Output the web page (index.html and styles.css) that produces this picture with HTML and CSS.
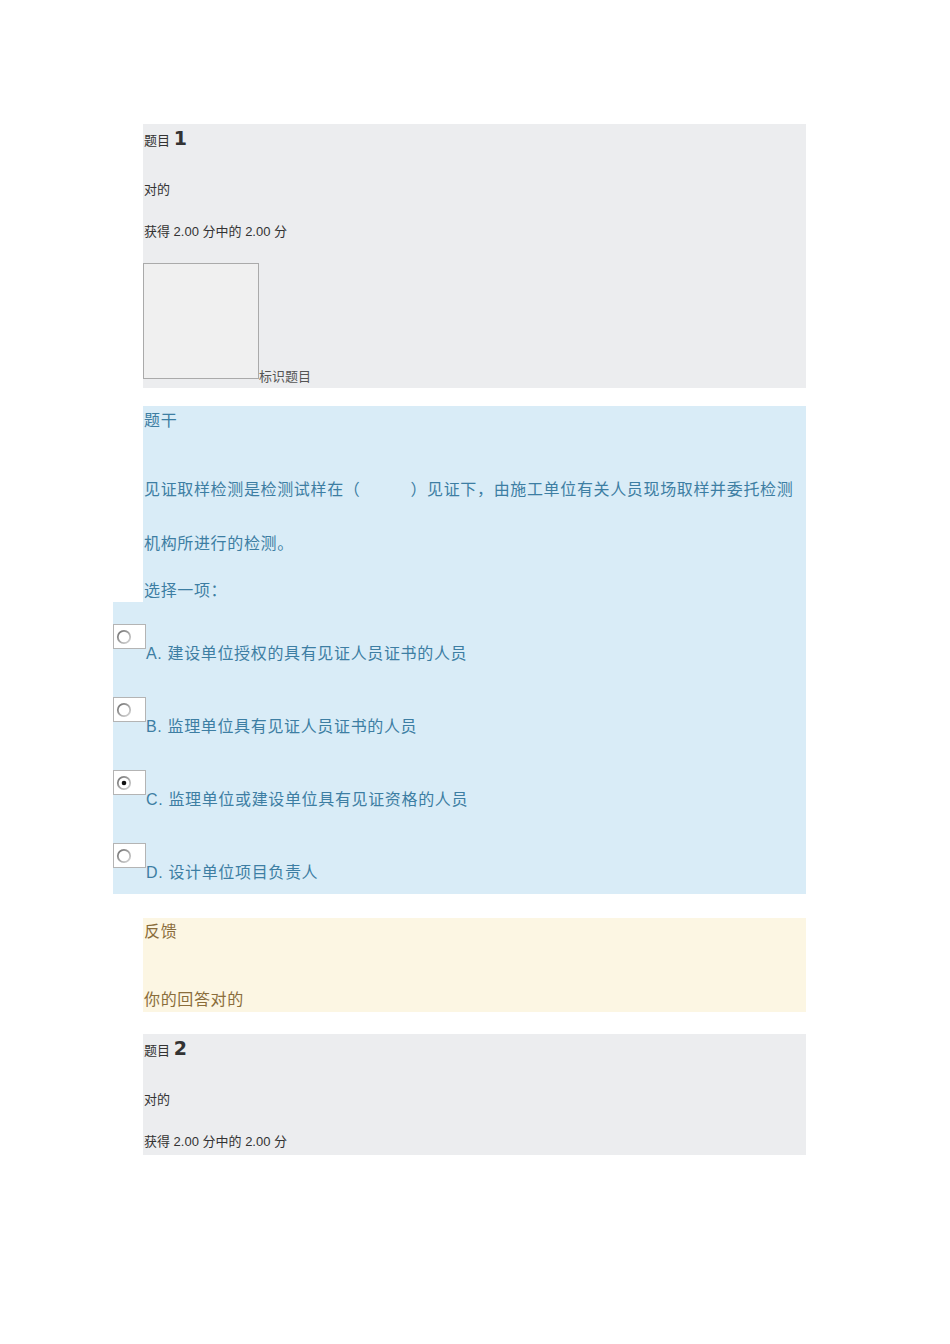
FILE: index.html
```html
<!DOCTYPE html>
<html lang="zh-CN">
<head>
<meta charset="utf-8">
<title>测验</title>
<link rel="stylesheet" href="styles.css">
</head>
<body>
<div class="page">
  <section class="info">
    <h3 class="qno">题目 <span class="num">1</span></h3>
    <div class="state">对的</div>
    <div class="grade">获得 2.00 分中的 2.00 分</div>
    <div class="flag"><span class="flagbox"></span><span class="flagtext">标识题目</span></div>
  </section>

  <section class="content">
    <h4 class="stemtitle">题干</h4>
    <p class="stem">见证取样检测是检测试样在（&emsp;&emsp;&emsp;）见证下，由施工单位有关人员现场取样并委托检测机构所进行的检测。</p>
    <p class="prompt">选择一项：</p>
    <div class="answer">
      <div class="opt">
        <span class="radio"><svg width="16" height="16" viewBox="0 0 16 16"><defs><linearGradient id="g1" x1="0" y1="0" x2="1" y2="1"><stop offset="0" stop-color="#6f6f6f"/><stop offset="1" stop-color="#d8d8d8"/></linearGradient></defs><circle cx="8" cy="8" r="6.2" fill="#fff" stroke="url(#g1)" stroke-width="1.8"/></svg></span>
        <span class="otext">A. 建设单位授权的具有见证人员证书的人员</span>
      </div>
      <div class="opt">
        <span class="radio"><svg width="16" height="16" viewBox="0 0 16 16"><circle cx="8" cy="8" r="6.2" fill="#fff" stroke="url(#g1)" stroke-width="1.8"/></svg></span>
        <span class="otext">B. 监理单位具有见证人员证书的人员</span>
      </div>
      <div class="opt">
        <span class="radio"><svg width="16" height="16" viewBox="0 0 16 16"><circle cx="8" cy="8" r="6.2" fill="#fff" stroke="url(#g1)" stroke-width="1.8"/><circle cx="8" cy="8" r="2.3" fill="#111"/></svg></span>
        <span class="otext">C. 监理单位或建设单位具有见证资格的人员</span>
      </div>
      <div class="opt">
        <span class="radio"><svg width="16" height="16" viewBox="0 0 16 16"><circle cx="8" cy="8" r="6.2" fill="#fff" stroke="url(#g1)" stroke-width="1.8"/></svg></span>
        <span class="otext">D. 设计单位项目负责人</span>
      </div>
    </div>
  </section>

  <section class="feedback">
    <h4 class="fbtitle">反馈</h4>
    <p class="fbtext">你的回答对的</p>
  </section>

  <section class="info info2">
    <h3 class="qno">题目 <span class="num">2</span></h3>
    <div class="state">对的</div>
    <div class="grade">获得 2.00 分中的 2.00 分</div>
  </section>
</div>
</body>
</html>
```

FILE: styles.css
```css
html, body {
  margin: 0;
  padding: 0;
  background: #ffffff;
}
body {
  font-family: "Liberation Sans", "Noto Sans CJK SC", sans-serif;
}
.page {
  padding-top: 124px;
  margin-left: 143px;
  width: 663px;
}
h3, h4, p {
  margin: 0;
  font-weight: normal;
}
.info {
  background: #ecedef;
  color: #333333;
  font-size: 13px;
  padding-bottom: 9px;
}
.qno {
  font-size: 13px;
  line-height: 28px;
  height: 28px;
  padding-left: 1px;
}
.num {
  font-family: "DejaVu Sans", "Liberation Sans", sans-serif;
  font-weight: bold;
  font-size: 19px;
}
.state {
  line-height: 20px;
  margin-top: 28px;
  padding-left: 1px;
}
.grade {
  line-height: 20px;
  margin-top: 22px;
  padding-left: 1px;
}
.flag {
  display: flex;
  align-items: flex-end;
  margin-top: 21px;
}
.flagbox {
  width: 114px;
  height: 114px;
  background: #f0f0f0;
  border: 1px solid #aaaaaa;
}
.flagtext {
  line-height: 16px;
  margin-bottom: -6px;
  color: #555555;
}
.info2 {
  margin-top: 22px;
  padding-bottom: 3px;
}
.content {
  background: #d9ecf7;
  color: #3d7ea3;
  font-size: 16px;
  letter-spacing: 0.65px;
  padding-top: 1px;
  margin-top: 18px;
}
.stemtitle {
  font-size: 16px;
  line-height: 28px;
  padding-left: 1px;
}
.stem {
  line-height: 54px;
  margin-top: 28px;
  padding-left: 1px;
}
.prompt {
  line-height: 22px;
  margin-top: 9px;
  padding-left: 1px;
}
.answer {
  margin-left: -30px;
  background: #d9ecf7;
  padding-top: 22px;
  padding-bottom: 11px;
  display: flex;
  flex-direction: column;
  gap: 33px;
}
.opt {
  display: flex;
  align-items: flex-start;
}
.radio {
  box-sizing: border-box;
  width: 33px;
  height: 25px;
  background: #ffffff;
  border: 1px solid #b4b4b4;
  padding: 4px 0 0 2px;
  flex: none;
}
.radio svg {
  display: block;
}
.otext {
  line-height: 20px;
  margin-top: 20px;
  color: #3d7ea3;
}
.feedback {
  background: #fcf6e3;
  color: #8a6d3b;
  font-size: 16px;
  letter-spacing: 0.65px;
  padding-top: 1px;
  margin-top: 24px;
}
.fbtitle {
  font-size: 16px;
  line-height: 26px;
  padding-left: 1px;
}
.fbtext {
  line-height: 24px;
  margin-top: 43px;
  padding-left: 1px;
}
```
